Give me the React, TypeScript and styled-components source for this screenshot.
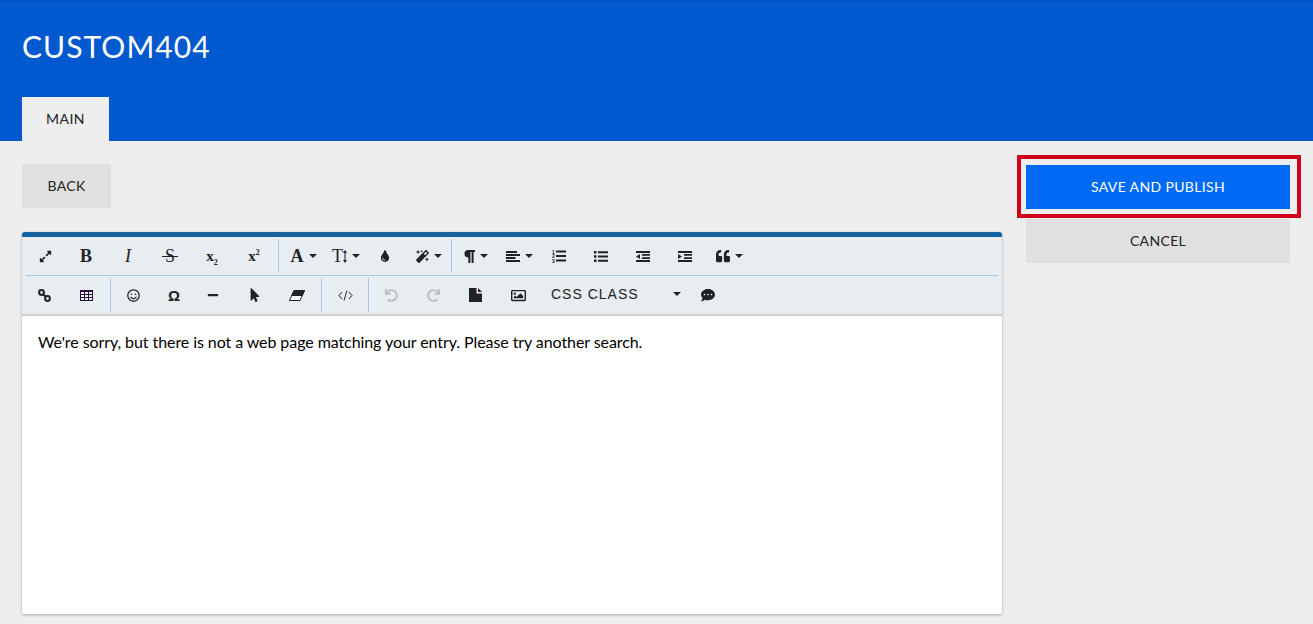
import React from "react";
import styled, { createGlobalStyle } from "styled-components";
import {
  FaCommentDots,
  FaExpandAlt,
  FaMagic,
  FaMinus,
  FaMousePointer,
  FaQuoteLeft,
  FaRedo,
  FaRegImage,
  FaRegSmile,
  FaTint,
  FaUndo,
} from "react-icons/fa";

const GlobalStyle = createGlobalStyle`
  html, body {
    margin: 0;
    padding: 0;
    height: 100%;
    background: #eeeeee;
    font-family: Lato, "Liberation Sans", sans-serif;
    overflow: hidden;
  }
`;

const Header = styled.header`
  height: 141px;
  box-sizing: border-box;
  background: #0059ce;
  border-top: 1px solid #0050b8;
  padding: 29px 22px 0;
  display: flex;
  flex-direction: column;
  justify-content: space-between;
`;

const Title = styled.h1`
  margin: 0;
  font-size: 30px;
  line-height: 32px;
  font-weight: 400;
  letter-spacing: 1.05px;
  color: #ffffff;
`;

const Tab = styled.div`
  width: 87px;
  height: 44px;
  box-sizing: border-box;
  padding-bottom: 2px;
  background: #eeeeee;
  color: #222222;
  font-size: 14px;
  letter-spacing: 0.45px;
  display: flex;
  align-items: center;
  justify-content: center;
`;

const Body = styled.main`
  display: flex;
  align-items: flex-start;
  padding: 14px 12px 0 22px;
`;

const Left = styled.section`
  width: 980px;
  flex: none;
  padding-top: 9px;
`;

const Right = styled.aside`
  margin-left: 15px;
  width: 284px;
  flex: none;
`;

const Button = styled.button<{ $primary?: boolean }>`
  display: block;
  border: 0;
  padding: 0 0 2px;
  height: 44px;
  font-family: inherit;
  font-size: 14px;
  letter-spacing: 0.35px;
  background: ${(p) => (p.$primary ? "#006af5" : "#e0e0e0")};
  color: ${(p) => (p.$primary ? "#ffffff" : "#222222")};
`;

const BackButton = styled(Button)`
  width: 89px;
`;

const ActionButton = styled(Button)`
  width: 264px;
`;

const Highlight = styled.div`
  box-sizing: border-box;
  height: 63px;
  border: 4px solid #d0021b;
  padding: 6px 5px;
`;

const CancelRow = styled.div`
  padding: 1px 0 0 9px;
`;

const Editor = styled.div`
  margin-top: 24px;
  height: 382px;
  box-sizing: border-box;
  background: #ffffff;
  border-top: 5px solid #14629f;
  border-radius: 3px 3px 2px 2px;
  box-shadow: 0 1px 3px rgba(0, 0, 0, 0.3);
`;

const Toolbar = styled.div`
  background: #e8edf2;
  border-bottom: 2px solid #d0d0d0;
  padding: 0 4px 0 1px;
`;

const ToolRow = styled.div<{ $divided?: boolean }>`
  height: 38px;
  display: flex;
  align-items: center;
  border-bottom: ${(p) => (p.$divided ? "1px solid #a9c8e8" : "0")};
  margin-left: ${(p) => (p.$divided ? "3px" : "0")};
`;

const Tool = styled.span<{ $w?: number }>`
  width: ${(p) => p.$w ?? 42}px;
  height: 100%;
  flex: none;
  display: flex;
  align-items: center;
  justify-content: center;
  gap: 5px;
  color: #222222;
`;

const Sep = styled.span<{ $flush?: boolean }>`
  flex: none;
  width: 1px;
  height: 34px;
  margin-left: ${(p) => (p.$flush ? 0 : 3)}px;
  background: #a9c8e8;
`;

const Caret = styled.i`
  flex: none;
  width: 0;
  height: 0;
  border-left: 4px solid transparent;
  border-right: 4px solid transparent;
  border-top: 4px solid #222222;
`;

const Glyph = styled.span<{ $italic?: boolean; $regular?: boolean; $size?: number }>`
  font-family: "Liberation Serif", serif;
  font-weight: ${(p) => (p.$italic || p.$regular ? 400 : 700)};
  font-style: ${(p) => (p.$italic ? "italic" : "normal")};
  font-size: ${(p) => p.$size ?? 18}px;
  line-height: 1;
  color: #222222;
  sub, sup {
    font-size: 8px;
    line-height: 0;
  }
`;

const StrikeGlyph = styled(Glyph)`
  position: relative;
  &::after {
    content: "";
    position: absolute;
    left: -3px;
    right: -3px;
    top: 9px;
    height: 1px;
    background: #222222;
  }
`;

const OmegaGlyph = styled(Glyph)`
  font-family: "Liberation Sans", sans-serif;
`;

const SizeGroup = styled.span`
  display: flex;
  align-items: center;
  gap: 0;
`;

const ClassPicker = styled.span`
  flex: none;
  width: 145px;
  box-sizing: border-box;
  padding: 0 4px 2px 11px;
  display: flex;
  align-items: center;
  justify-content: space-between;
  font-family: "Liberation Sans", sans-serif;
  font-size: 14px;
  letter-spacing: 1px;
  color: #222222;
`;

const Content = styled.div`
  padding: 16px;
  font-size: 16px;
  letter-spacing: -0.08px;
  line-height: 20px;
  color: #000000;
`;

const LinkIcon = () => (
  <svg width="13" height="13" viewBox="0 0 13 13" fill="none" stroke="#222" strokeWidth="2">
    <circle cx="3.5" cy="3.5" r="2.4" />
    <circle cx="9.5" cy="9.5" r="2.4" />
    <path d="M5 5l3 3" />
  </svg>
);

const TableIcon = () => (
  <svg width="13" height="11" viewBox="0 0 13 11" fill="none" stroke="#2a1038" strokeWidth="1">
    <rect x="0.5" y="0.5" width="12" height="10" />
    <path d="M0 1.5h13" />
    <path d="M0 4.5h13M0 7.5h13M4.5 1v10M8.5 1v10" />
  </svg>
);

const EraserIcon = () => (
  <svg width="16" height="11" viewBox="0 0 16 11">
    <path d="M5 .5h10.5L11 10.5H.5z" fill="#fff" stroke="#222" />
    <path d="M5 .5h10.5L13.2 5.5H2.8z" fill="#222" stroke="#222" />
  </svg>
);

const CodeIcon = () => (
  <svg width="15" height="11" viewBox="0 0 15 11" fill="none" stroke="#222">
    <path d="M4 2L1 5.5 4 9M11 2l3 3.5L11 9M9 .5L6 10.5" />
  </svg>
);

const FileIcon = () => (
  <svg width="13" height="14" viewBox="0 0 13 14" fill="#222">
    <path d="M0 0h7.5v5.5H13V14H0z" />
    <path d="M9 0l4 4H9z" />
  </svg>
);

const SizeIcon = () => (
  <svg width="4" height="13" viewBox="0 0 4 13" fill="#222">
    <path d="M2 0l2 3H2.5v7H4l-2 3-2-3h1.5V3H0z" />
  </svg>
);

const ParagraphIcon = () => (
  <svg width="11" height="13" viewBox="0 0 11 13" fill="#222">
    <path d="M4 0h7v2H9.6v11H7.6V2H6.4v11H4.4V7.4A3.7 3.7 0 0 1 4 0z" />
  </svg>
);

const AlignIcon = () => (
  <svg width="14" height="11" viewBox="0 0 14 11" fill="#222">
    <path d="M0 0h11v2H0zM0 3h14v2H0zM0 6h9.5v2H0zM0 9h14v2H0z" />
  </svg>
);

const OrderedIcon = () => (
  <svg width="14" height="14" viewBox="0 0 14 14" fill="#222">
    <text x="0" y="4.5" fontFamily="Liberation Sans" fontSize="5" fontWeight="700">1</text>
    <text x="0" y="9.3" fontFamily="Liberation Sans" fontSize="5" fontWeight="700">2</text>
    <text x="0" y="14" fontFamily="Liberation Sans" fontSize="5" fontWeight="700">3</text>
    <path d="M4 1.5h10v2H4zM4 6h10v2H4zM4 10.5h10v2H4z" />
  </svg>
);

const BulletIcon = () => (
  <svg width="14" height="11" viewBox="0 0 14 11" fill="#222">
    <path d="M0 0h2.5v2.5H0zM0 4.2h2.5v2.5H0zM0 8.5h2.5V11H0zM4 .2h10v2H4zM4 4.5h10v2H4zM4 8.8h10v2H4z" />
  </svg>
);

const OutdentIcon = () => (
  <svg width="14" height="11" viewBox="0 0 14 11" fill="#222">
    <path d="M0 0h14v2H0zM6 3h8v1.8H6zM6 6.2h8V8H6zM0 9h14v2H0zM0 5.5L4 3v5z" />
  </svg>
);

const IndentIcon = () => (
  <svg width="14" height="11" viewBox="0 0 14 11" fill="#222">
    <path d="M0 0h14v2H0zM6 3h8v1.8H6zM6 6.2h8V8H6zM0 9h14v2H0zM4 5.5L0 3v5z" />
  </svg>
);

const App = () => (
  <>
    <GlobalStyle />
    <Header>
      <Title>CUSTOM404</Title>
      <Tab>MAIN</Tab>
    </Header>
    <Body>
      <Left>
        <BackButton>BACK</BackButton>
        <Editor>
          <Toolbar>
            <ToolRow $divided>
              <Tool $w={39}><FaExpandAlt size={13} /></Tool>
              <Tool><Glyph>B</Glyph></Tool>
              <Tool><Glyph $italic>I</Glyph></Tool>
              <Tool><StrikeGlyph $regular>S</StrikeGlyph></Tool>
              <Tool><Glyph $size={15}>x<sub>2</sub></Glyph></Tool>
              <Tool><Glyph $size={15}>x<sup>2</sup></Glyph></Tool>
              <Sep />
              <Tool $w={49}><Glyph>A</Glyph><Caret /></Tool>
              <Tool $w={36}><SizeGroup><Glyph $regular>T</Glyph><SizeIcon /></SizeGroup><Caret /></Tool>
              <Tool><FaTint size={12} /></Tool>
              <Tool $w={45}><FaMagic size={13} /><Caret /></Tool>
              <Sep $flush />
              <Tool $w={48}><ParagraphIcon /><Caret /></Tool>
              <Tool $w={38}><AlignIcon /><Caret /></Tool>
              <Tool><OrderedIcon /></Tool>
              <Tool><BulletIcon /></Tool>
              <Tool><OutdentIcon /></Tool>
              <Tool><IndentIcon /></Tool>
              <Tool $w={46}><FaQuoteLeft size={14} /><Caret /></Tool>
            </ToolRow>
            <ToolRow>
              <Tool><LinkIcon /></Tool>
              <Tool><TableIcon /></Tool>
              <Sep />
              <Tool $w={45}><FaRegSmile size={13} /></Tool>
              <Tool $w={36}><OmegaGlyph $size={15}>Ω</OmegaGlyph></Tool>
              <Tool><FaMinus size={12} /></Tool>
              <Tool><FaMousePointer size={14} /></Tool>
              <Tool><EraserIcon /></Tool>
              <Sep />
              <Tool $w={46}><CodeIcon /></Tool>
              <Sep $flush />
              <Tool $w={44}><FaUndo size={13} color="#bdbdbd" /></Tool>
              <Tool $w={41}><FaRedo size={13} color="#bdbdbd" /></Tool>
              <Tool><FileIcon /></Tool>
              <Tool $w={44}><FaRegImage size={15} /></Tool>
              <ClassPicker>CSS CLASS <Caret /></ClassPicker>
              <Tool $w={46}><FaCommentDots size={14} /></Tool>
            </ToolRow>
          </Toolbar>
          <Content>We're sorry, but there is not a web page matching your entry. Please try another search.</Content>
        </Editor>
      </Left>
      <Right>
        <Highlight>
          <ActionButton $primary>SAVE AND PUBLISH</ActionButton>
        </Highlight>
        <CancelRow>
          <ActionButton>CANCEL</ActionButton>
        </CancelRow>
      </Right>
    </Body>
  </>
);

export default App;
